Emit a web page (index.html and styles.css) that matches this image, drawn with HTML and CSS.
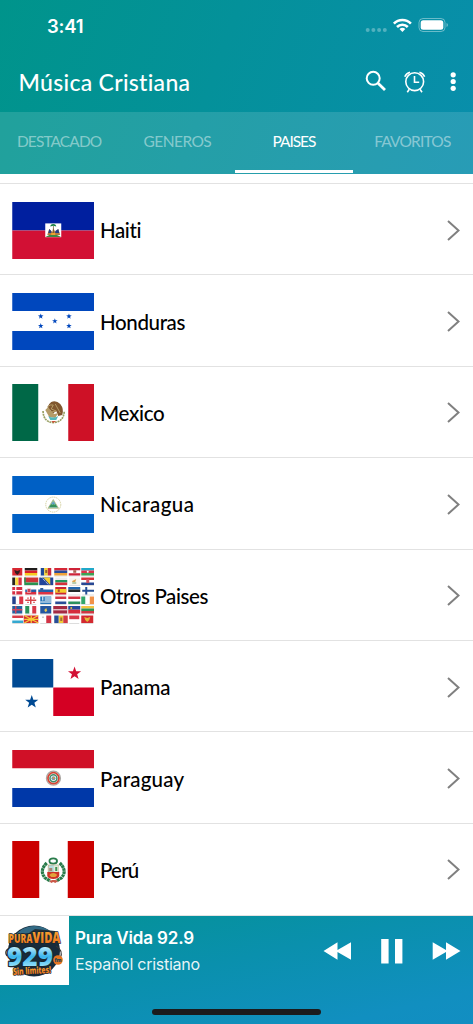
FILE: index.html
```html
<!DOCTYPE html>
<html lang="es">
<head>
<meta charset="utf-8">
<title>Música Cristiana</title>
<link rel="stylesheet" href="styles.css">
</head>
<body>
<svg width="0" height="0" class="defs">
  <defs>
    <path id="star" d="M0-1 .235-.324.951-.309.38.124.588.809 0 .4-.588.809-.38.124-.951-.309-.235-.324Z"/>
    <path id="chev" d="M1 1 11.500 10.500 1 20"/>
  </defs>
</svg>
<div class="app">
  <header class="header">
    <div class="status">
      <span class="time">3:41</span>
      <svg class="status-icons" width="84" height="18" viewBox="0 0 84 18">
        <g fill="#fff" opacity=".3"><circle cx="2.700" cy="13" r="2"/><circle cx="8.400" cy="13" r="2"/><circle cx="14.100" cy="13" r="2"/><circle cx="19.800" cy="13" r="2"/></g>
        <g fill="none" stroke="#fff" stroke-width="2.600"><path d="M28.900 6.600a12 12 0 0 1 17 0"/><path d="M32 10a7.600 7.600 0 0 1 10.800 0"/></g>
        <path d="M34.500 12a4.500 4.500 0 0 1 5.800 0l-2.900 2.900Z" fill="#fff"/>
        <rect x="54" y="1.500" width="26" height="13" rx="4" fill="none" stroke="#fff" opacity=".4"/>
        <rect x="55.700" y="3.200" width="22.600" height="9.600" rx="2.500" fill="#fff"/>
        <path d="M81.500 6v4q1.500-.4 1.500-2t-1.500-2" fill="#fff" opacity=".4"/>
      </svg>
    </div>
    <div class="toolbar">
      <h1 class="title">Música Cristiana</h1>
      <svg class="tools" width="96" height="26" viewBox="0 0 96 26" fill="none" stroke="#fff">
        <circle cx="10.200" cy="10.300" r="6.500" stroke-width="2"/><path d="M14.800 15 22 22" stroke-width="2.800"/>
        <circle cx="51.700" cy="13.700" r="8.900" stroke-width="1.600"/><path d="M51.500 8v6.300h4.700M46.300 21.300l-2 2.900M57 21.300l2 2.900M41.800 8.800q1.400-3.600 5.200-4.600M61.600 8.800q-1.400-3.600-5.200-4.600" stroke-width="1.600"/>
        <g fill="#fff" stroke="none"><circle cx="90.200" cy="6.800" r="2.600"/><circle cx="90.200" cy="13.500" r="2.600"/><circle cx="90.200" cy="20.300" r="2.600"/></g>
      </svg>
    </div>
    <nav class="tabs">
      <span class="tab t1">DESTACADO</span><span class="tab t2">GENEROS</span><span class="tab t3 active">PAISES</span><span class="tab t4">FAVORITOS</span>
    </nav>
  </header>

  <main class="list">
    <div class="row">
      <svg class="flag" viewBox="0 0 82 57"><path fill="#001f9f" d="M0 0h82v28.500H0z"/><path fill="#d21034" d="M0 28.500h82V57H0z"/><path fill="#fff" d="M33 21.400h16v13.800H33z"/><path d="M33.200 34.900q7.500-4.600 15.600 0Z" fill="#3f8745"/><path d="m35 33 2-6 3 3 1-4 2 4 3-3 2 6Z" fill="#b37a3c"/><path d="m36 31 1-4 2 2v2m4 0v-2l3-2 1 4" fill="#263d83"/><path d="M39 31h4v2h-4z" fill="#f0a12c"/><path d="M40.700 24h.7v7h-.7z" fill="#6b5930"/><path d="M38 24.600q0-2.400 3-2.700 3 .3 3 2.700l-3-.9Z" fill="#178043"/></svg>
      <span class="name n1">Haiti</span><svg class="chev" viewBox="0 0 13 21"><use href="#chev"/></svg>
    </div>
    <div class="row">
      <svg class="flag" viewBox="0 0 82 57"><path fill="#fff" d="M0 0h82v57H0z"/><path fill="#0047bd" d="M0 0h82v18H0zM0 38h82v19H0z"/><g fill="#0047bd"><use href="#star" transform="translate(28.500 23.300) scale(2.900)"/><use href="#star" transform="translate(56.700 23.300) scale(2.900)"/><use href="#star" transform="translate(42.600 28.200) scale(2.900)"/><use href="#star" transform="translate(28.500 33) scale(2.900)"/><use href="#star" transform="translate(56.700 33) scale(2.900)"/></g></svg>
      <span class="name n2">Honduras</span><svg class="chev" viewBox="0 0 13 21"><use href="#chev"/></svg>
    </div>
    <div class="row">
      <svg class="flag" viewBox="0 0 82 57"><path fill="#fff" d="M0 0h82v57H0z"/><path fill="#006847" d="M0 0h26v57H0z"/><path fill="#ce1126" d="M56 0h26v57H56z"/><path d="M30.800 27q.4 11.200 10.200 11.600Q51.600 38 52 27" fill="none" stroke="#99a064" stroke-width="1.700" stroke-dasharray="2 .7"/><path d="M36 27q-2-5 3-9 5-2 9 2 4 5 2 11l-4 1-2-5-4 3-2-4Z" fill="#80572f"/><path d="M35 23q3-3 6-2l-2 4 5 2-5 1M43 20l5 9" fill="none" stroke="#b39a64"/><path d="m33 26 3-3 2 3 4 4 4-1-3 5-6-1Z" fill="#b49b68"/><path d="M36 32q5 3 10 0l-2 4h-6Z" fill="#52b8bc"/><path d="m39 37 2 2 3-2" fill="#ca543a"/></svg>
      <span class="name n3">Mexico</span><svg class="chev" viewBox="0 0 13 21"><use href="#chev"/></svg>
    </div>
    <div class="row">
      <svg class="flag" viewBox="0 0 82 57"><path fill="#fff" d="M0 0h82v57H0z"/><path fill="#0060c5" d="M0 0h82v19H0zM0 38h82v19H0z"/><circle cx="41" cy="28.600" r="7.500" fill="none" stroke="#d5d1a0" stroke-width="1" stroke-dasharray="1.300 .7"/><path d="m41 23.500-5.300 8.800h10.600Z" fill="#82bda9" stroke="#b8b878" stroke-width=".7"/><path d="m37 31 2-3 1 1 1-1 1 1 1-1 2 3Z" fill="#33915a"/><path d="M39.500 26.500h3v1.500h-3z" fill="#5f9bc7"/></svg>
      <span class="name n4">Nicaragua</span><svg class="chev" viewBox="0 0 13 21"><use href="#chev"/></svg>
    </div>
    <div class="row">
      <svg class="flag" viewBox="0 0 82 57"><path fill="#fff" d="M0 0h82v57H0z"/>
        <path d="M0 9h10m2.500 0H25m3 0h11m3 0h13m1.500 0H68m1 0h13M0 18.500h9.500m2.500 0h14m1 0h14m2 0h12m2 0h11m2 0h13M0 28h10m3 0h11m2 0h15m2 0h11m2 0h12m2 0h12M0 37.500h11m2 0h11m4 0h11m4 0h11m2 0h12m1 0h13M0 47h10m3 0h11m4 0h11m2 0h41M0 56.500h26m2 0h12m2 0h14m1 0h10m2 0h12" stroke="#bbb" stroke-width=".5"/>
        <!-- fila 1 -->
        <path fill="#d72832" d="M0 1h10v7.500H0z"/><path fill="#341c20" d="m2 3 3 1 3-1-1 3-2 2-2-2Z"/>
        <path fill="#201d1c" d="M12.500 1H25v2.500H12.500z"/><path fill="#d7202c" d="M12.500 3.500H25V6H12.500z"/><path fill="#f7ca20" d="M12.500 6H25v2.500H12.500z"/>
        <path fill="#1e489a" d="M28.500 1H32v7.500h-3.500z"/><path fill="#f3cf33" d="M32 1h3.500v7.500H32z"/><path fill="#c82b3d" d="M35.500 1H39v7.500h-3.500z"/><path fill="#98622f" d="M33 3h2v3h-2z"/>
        <path fill="#d42737" d="M42 1h13v2.500H42z"/><path fill="#294b99" d="M42 3.500h13V6H42z"/><path fill="#efa33a" d="M42 6h13v2.500H42z"/>
        <path fill="#ce2338" d="M56.500 1H68v2.200H56.500zM56.500 6.300H68v2.200H56.500z"/><path fill="#a96552" d="M61 3.200h3v2.600h-3z"/>
        <path fill="#20a8c9" d="M69 1h13v2.500H69z"/><path fill="#db3349" d="M69 3.500h13V6H69z"/><path fill="#3da355" d="M69 6h13v2.500H69z"/><circle cx="75.500" cy="4.700" r="1" fill="#fff"/>
        <!-- fila 2 -->
        <path fill="#292522" d="M0 10.500h3V18H0z"/><path fill="#f8d83a" d="M3 10.500h3.200V18H3z"/><path fill="#d93345" d="M6.200 10.500h3.300V18H6.200z"/>
        <path fill="#cf3438" d="M12 10.500h14v5H12z"/><path fill="#299351" d="M12 15.500h14V18H12zM12 10.500h1.500V18H12z"/>
        <path fill="#22459a" d="M27 10.500h14V18H27z"/><path fill="#f4cd2e" d="M31 10.500h7V18Z"/><path stroke="#fff" stroke-dasharray="1" d="m29.500 10.500 7 7.500"/>
        <path fill="#eee" d="M43 10.500h12V13H43z"/><path fill="#24945e" d="M43 13h12v2.500H43z"/><path fill="#d6303a" d="M43 15.500h12V18H43z"/>
        <path fill="#f8f6ef" d="M57 10.500h11V18H57z"/><path fill="#dfa34e" d="m60 14 4-2-1 3h-3Z"/><path stroke="#77a267" d="m60 16 4 0"/>
        <path fill="#d8323a" d="M69 10.500h13V13H69z"/><path fill="#294894" d="M69 15.500h13V18H69z"/><path fill="#cf5364" d="M74 12h3v4h-3z"/>
        <!-- fila 3 -->
        <path fill="#d62e42" d="M0 20h10v7.500H0z"/><path stroke="#fff" stroke-width="1.200" d="M3.500 20v7.500M0 23.700h10"/>
        <path fill="#2858a0" d="M13 22.500h11v2.500H13z"/><path fill="#d82e40" d="M13 25h11v2.500H13z"/><path fill="#ce4053" stroke="#fff" stroke-width=".5" d="M15 21.500h3.500v4H15z"/>
        <path fill="#2360aa" d="M26 22.500h15V25H26z"/><path fill="#dc3444" d="M26 25h15v2.500H26z"/><path fill="#325f9d" d="M28 21h3v4h-3z"/>
        <path fill="#cc2634" d="M43 20h11v7.500H43z"/><path fill="#f4cd2c" d="M43 22h11v3.700H43z"/><path fill="#a24b36" d="M45.500 22.400h2v2.500h-2z"/>
        <path fill="#2065ad" d="M56 20h12v2.500H56z"/><path fill="#232829" d="M56 22.500h12V25H56z"/>
        <path stroke="#254f94" stroke-width="2" d="M74 20v7.500M70 23.700h12"/>
        <!-- fila 4 -->
        <path fill="#26428f" d="M0 29.500h3.500V37H0z"/><path fill="#dc3446" d="M7 29.500h4V37H7z"/>
        <path stroke="#d64348" stroke-width="1.500" d="M18.500 29.500V37M13 33.200h11"/><path stroke="#d64348" stroke-width="1.300" stroke-dasharray="1.500 4.500" d="M15 31.200h8M15 35.300h8"/>
        <path fill="#2876b8" d="M28 29.500h11V37H28z"/><path stroke="#fff" d="M32.500 31H39m-6.500 2H39m-11 2h11M30.500 29.500v4"/>
        <path fill="#d33645" d="M43 29.500h11V32H43z"/><path fill="#2a4d98" d="M43 34.500h11V37H43z"/>
        <path fill="#d33645" d="M56 29.500h12V32H56z"/><path fill="#2b915d" d="M56 34.500h12V37H56z"/>
        <path fill="#32a66a" d="M69 29.500h4V37h-4z"/><path fill="#f29249" d="M77.500 29.500H82V37h-4.500z"/>
        <!-- fila 5 -->
        <path fill="#2760a0" d="M0 39h10v7.500H0z"/><path stroke="#d7455b" stroke-width="1.400" d="M3.500 39v7.500M0 42.700h10"/>
        <path fill="#2b925a" d="M13 39h4v7.500h-4z"/><path fill="#d63847" d="M20 39h4v7.500h-4z"/>
        <path fill="#24569f" d="M28 39h11v7.500H28z"/><path fill="#e5c653" d="m32 43 2-2 1 3-2 1Z"/>
        <path fill="#a52a42" d="M41 39h14v7.500H41z"/><path stroke="#fff" d="M41 42.800h14"/>
        <path fill="#24489a" d="M56 39h12v3.700H56z"/><path fill="#d62b3c" d="M56 42.700h12v3.800H56z"/><circle cx="59" cy="41" r="1" fill="#e9bf3c"/>
        <path fill="#f3c541" d="M69 39h13v2.500H69z"/><path fill="#2c9355" d="M69 41.500h13V44H69z"/><path fill="#cf3942" d="M69 44h13v2.500H69z"/>
        <!-- fila 6 -->
        <path fill="#d83c48" d="M0 48.500h11V51H0z"/><path fill="#35a8d0" d="M0 53.500h11V56H0z"/>
        <path fill="#d62d31" d="M11.500 48.500H26V56H11.500z"/><path stroke="#f6ce35" stroke-width="1.200" d="m12 48.500 14 7.500m0-7.500L12 56m7-7.500V56m-7-3.700h14"/><circle cx="19" cy="52.300" r="1.700" fill="#f6ce35"/>
        <path fill="#d13345" d="M34 48.500h5V56h-5z"/><path fill="#bbb" d="M30 49.500h1.500V51H30z"/>
        <path fill="#294e98" d="M42 48.500h4.500V56H42z"/><path fill="#f0cc38" d="M46.500 48.500H51V56h-4.500z"/><path fill="#d13b43" d="M51 48.500h4.500V56H51z"/><path fill="#a36e35" d="M48 50.500h2V54h-2z"/>
        <path fill="#d83b4b" d="M57 48.500h10v3.700H57z"/><path fill="#d32930" d="M69 48.500h12V56H69z"/><path fill="#e4ba38" d="m72 50 3 1 3-1-1 3-2 2-2-2Z"/>
      </svg>
      <span class="name n5">Otros Paises</span><svg class="chev" viewBox="0 0 13 21"><use href="#chev"/></svg>
    </div>
    <div class="row">
      <svg class="flag" viewBox="0 0 82 57"><path fill="#fff" d="M0 0h82v57H0z"/><path fill="#004a93" d="M0 0h41v28.500H0z"/><path fill="#d40023" d="M41 28.500h41V57H41z"/><use href="#star" fill="#d21034" transform="translate(62.300 14.500) scale(6.900)"/><use href="#star" fill="#004a93" transform="translate(19.500 43) scale(6.900)"/></svg>
      <span class="name n6">Panama</span><svg class="chev" viewBox="0 0 13 21"><use href="#chev"/></svg>
    </div>
    <div class="row">
      <svg class="flag" viewBox="0 0 82 57"><path fill="#fff" d="M0 0h82v57H0z"/><path fill="#d01027" d="M0 0h82v18.300H0z"/><path fill="#0038a8" d="M0 38h82v19H0z"/><g fill="none"><circle cx="41.200" cy="28.200" r="7" stroke="#aaa7a3" stroke-width="1.300"/><circle cx="41.200" cy="28.200" r="5.500" stroke="#d34434" stroke-width="1.700"/><circle cx="41.200" cy="28.200" r="3.500" stroke="#3f8a68" stroke-width="1.500"/></g><circle cx="41.200" cy="28.200" r="2" fill="#7898a8"/><path d="M40.700 27h1.500v2h-1.500z" fill="#db984a"/></svg>
      <span class="name n7">Paraguay</span><svg class="chev" viewBox="0 0 13 21"><use href="#chev"/></svg>
    </div>
    <div class="row">
      <svg class="flag" viewBox="0 0 82 57"><path fill="#fff" d="M0 0h82v57H0z"/><path fill="#cb0000" d="M0 0h27v57H0zM55.500 0H82v57H55.500z"/><g fill="none" stroke="#297b4a"><ellipse cx="41" cy="20" rx="3.800" ry="2.600" stroke-width="1.800"/><path d="M34.500 22q-8 8-1.500 15l5 3M47.500 22q8 8 1.500 15l-5 3" stroke-width="3.200" stroke-dasharray="2.800 .4"/></g><path d="M36 24h10v7H36z" fill="#b7dce0" stroke="#b49b60" stroke-width=".6"/><path d="M41.500 24.500H46V31h-4.500z" fill="#e6ead9"/><path d="M43 26h2v4h-2z" fill="#3d9454"/><path d="M37 27h3v3h-3z" fill="#aa8674"/><path d="M35 31h12v4q-1 3-6 3-5 0-6-3Z" fill="#ce3428"/><path d="M37 34q4-4 8 0l-2 2h-4Z" fill="#e2a33a"/><path d="m37 40 3-1h3l3 1-3 2-2-1-2 1Z" fill="#ca5949"/></svg>
      <span class="name n8">Perú</span><svg class="chev" viewBox="0 0 13 21"><use href="#chev"/></svg>
    </div>
  </main>

  <footer class="player">
    <svg class="cover" width="69" height="69" viewBox="0 0 69 69">
      <defs><linearGradient id="or" x2="0" y2="1"><stop stop-color="#ffb53d"/><stop offset="1" stop-color="#e86812"/></linearGradient><linearGradient id="bl" x2="0" y2="1"><stop offset=".2" stop-color="#e2faff"/><stop offset=".55" stop-color="#39b5ed"/><stop offset=".9" stop-color="#b3efff"/></linearGradient></defs>
      <path fill="#fff" d="M0 0h69v69H0z"/>
      <ellipse cx="34" cy="35" rx="26" ry="25.500" fill="#182b3b"/><path d="M12 24q8-14 23-14 13 0 21 12l-12-4-22 4Z" fill="#326a85"/>
      <path d="M7 40q-4-6 5-9M56 30q8 5 4 12" fill="none" stroke="#333" stroke-width="1.200"/>
      <path d="m9 19 20-2 6-4 20 2 5 12-51 1Z" fill="#223039"/>
      <g class="logo-text" stroke="#172630" paint-order="stroke" stroke-linejoin="round">
        <text x="8.500" y="27" font-size="13" textLength="24" lengthAdjust="spacingAndGlyphs" fill="url(#or)" stroke-width="1.600">PURA</text>
        <text x="32.500" y="26.500" font-size="15.500" textLength="28" lengthAdjust="spacingAndGlyphs" fill="url(#or)" stroke-width="1.600">VIDA</text>
        <text x="7" y="49.500" font-size="27" textLength="46" lengthAdjust="spacingAndGlyphs" fill="url(#bl)" stroke-width="2.500">929</text>
        <text x="13" y="58" font-size="9.500" textLength="38" lengthAdjust="spacingAndGlyphs" fill="url(#or)" stroke-width="1.500" transform="rotate(-3 32 55)">Sin límites!</text>
      </g>
      <circle cx="58" cy="44" r="4.800" fill="#e67520"/><text class="logo-text" x="54.500" y="46" font-size="5" fill="#214252">fm</text>
    </svg>
    <div class="track"><div class="station">Pura Vida 92.9</div><div class="genre">Español cristiano</div></div>
    <svg class="controls" width="140" height="30" viewBox="0 0 140 30" fill="#fff"><path d="M.500 15 14.500 6.300v7.800L28 6.300v17.400l-13.500-7.800v7.800ZM58.200 3h7.400v24.500h-7.400zM72 3h7.400v24.500H72zM109.700 6.300 123 14.100V6.300L137.500 15 123 23.700v-7.800l-13.300 7.800Z"/></svg>
    <div class="home"></div>
  </footer>
</div>
</body>
</html>
```
FILE: styles.css
```css
* { box-sizing: border-box; }
body { margin: 0; background: #fff; font-family: Lato, sans-serif; font-variant-ligatures: none; }
.defs { position: absolute; }
.app { width: 473px; height: 1024px; display: flex; flex-direction: column; overflow: hidden; }
.header { height: 174px; flex: none; background: linear-gradient(110deg, #00948b 0%, #04919a 45%, #098eac 100%); color: #fff; }
.status { height: 52px; padding: 17px 24px 0 47px; display: flex; justify-content: space-between; }
.time { font: 600 18.500px/18px Inter, sans-serif; letter-spacing: -.2px; }
.toolbar { height: 60px; padding: 0 14px 0 18.500px; display: flex; align-items: center; justify-content: space-between; }
.title { margin: 0; font-size: 23px; line-height: 30px; font-weight: 500; letter-spacing: .3px; }
.tools { display: block; margin-bottom: 3px; }
.status-icons { display: block; margin-right: 0; }
.tabs { height: 62px; display: grid; grid-template-columns: repeat(4, 1fr); background: rgba(255,255,255,.13); }
.tab { display: flex; align-items: center; justify-content: center; padding-top: 0; border-bottom: 3.500px solid transparent; margin-bottom: 1px; font-size: 15.500px; font-weight: 400; color: rgba(255,255,255,.46); white-space: nowrap; }
.tab.active { color: #fff; border-color: #fff; margin-left: -1.500px; margin-right: 2px; }
.t1 { letter-spacing: -.9px; }
.t2 { letter-spacing: -.55px; }
.t3 { letter-spacing: -1.050px; }
.t4 { letter-spacing: -.8px; padding-right: 3px; }
.list { height: 742px; flex: none; padding-top: 9px; background: #fff; border-bottom: 1.500px solid #e2e2e2; }
.row { height: 91.400px; border-top: 1.500px solid #e2e2e2; padding: 2px 13px 0 11.500px; display: flex; align-items: center; }
.flag { width: 82.500px; height: 57px; flex: none; display: block; }
.name { margin-left: 6px; font-size: 20.500px; line-height: 28px; font-weight: 500; color: #000; white-space: nowrap; }
.n1 { letter-spacing: -.4px; }
.n2 { letter-spacing: -.37px; }
.n3 { letter-spacing: -.3px; }
.n4 { letter-spacing: .42px; }
.n5 { letter-spacing: -.38px; }
.n6 { letter-spacing: -.15px; }
.n7 { letter-spacing: .2px; }
.n8 { letter-spacing: -.8px; }
.chev { width: 13px; height: 21px; margin-left: auto; fill: none; stroke: #808080; stroke-width: 2; }
.player { height: 108px; flex: none; position: relative; display: flex; align-items: flex-start; background: linear-gradient(to bottom right, #039294 0%, #0a90ad 45%, #118fc0 85%, #128ec2 100%); color: #fff; }
.cover { flex: none; display: block; }
.logo-text { font-family: "Open Sans", sans-serif; font-weight: 800; }
.track { padding: 11px 0 0 6px; font-family: Inter, sans-serif; }
.station { font-size: 17px; line-height: 23px; font-weight: 600; letter-spacing: -.15px; }
.genre { margin-top: 3px; font-size: 16px; line-height: 22px; letter-spacing: -.27px; color: rgba(255,255,255,.92); }
.controls { margin: 20px 10px 0 auto; display: block; }
.home { position: absolute; left: 152px; bottom: 9.500px; width: 169px; height: 6px; border-radius: 3px; background: #1b1b1c; }
```
